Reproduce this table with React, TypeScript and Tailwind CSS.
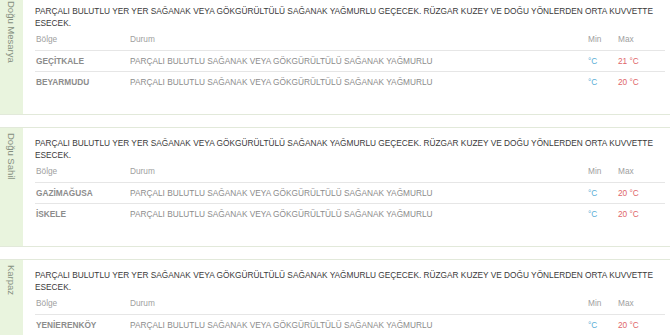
import type { ReactNode } from 'react'

interface Row {
  region: string
  status: string
  min: string
  max: string
}

interface Area {
  name: string
  rows: Row[]
}

const forecast =
  'PARÇALI BULUTLU YER YER SAĞANAK VEYA GÖKGÜRÜLTÜLÜ SAĞANAK YAĞMURLU GEÇECEK. RÜZGAR KUZEY VE DOĞU YÖNLERDEN ORTA KUVVETTE ESECEK.'
const status = 'PARÇALI BULUTLU SAĞANAK VEYA GÖKGÜRÜLTÜLÜ SAĞANAK YAĞMURLU'

const areas: Area[] = [
  {
    name: 'Doğu Mesarya',
    rows: [
      { region: 'GEÇİTKALE', status, min: '°C', max: '21 °C' },
      { region: 'BEYARMUDU', status, min: '°C', max: '20 °C' },
    ],
  },
  {
    name: 'Doğu Sahil',
    rows: [
      { region: 'GAZİMAĞUSA', status, min: '°C', max: '20 °C' },
      { region: 'İSKELE', status, min: '°C', max: '20 °C' },
    ],
  },
  {
    name: 'Karpaz',
    rows: [{ region: 'YENİERENKÖY', status, min: '°C', max: '20 °C' }],
  },
]

function Cells({ children, border }: { children: ReactNode; border?: boolean }) {
  return (
    <div
      className={`grid h-[21px] grid-cols-[95px_458px_30px_47px] items-center ${
        border ? 'border-t border-[#e6e6e6]' : ''
      }`}
    >
      {children}
    </div>
  )
}

function AreaPanel({ area }: { area: Area }) {
  return (
    <section className="flex h-[120px] w-[690px] shrink-0 border-y border-[#e2e9da] bg-white">
      <div className="w-[23px] shrink-0 bg-[#e9f4de] pt-[5px]">
        <span className="block pl-[6px] text-[9.5px] leading-[11px] text-[#858f80] [writing-mode:vertical-rl]">
          {area.name}
        </span>
      </div>
      <div className="w-[630px] pl-[12px] pt-[9px]">
        <p className="w-[630px] text-[8.3px] leading-[12px] text-[#3a3a3a]">{forecast}</p>
        <div className="w-[630px]">
          <Cells>
            <span className="pl-[1px] text-[#a0a0a0]">Bölge</span>
            <span className="text-[#a0a0a0]">Durum</span>
            <span className="text-[#a0a0a0]">Min</span>
            <span className="text-[#a0a0a0]">Max</span>
          </Cells>
          {area.rows.map((row) => (
            <Cells key={row.region} border>
              <span className="pl-[1px] font-bold text-[#8c8c8c]">{row.region}</span>
              <span className="text-[#8c8c8c]">{row.status}</span>
              <span className="text-[#5aaed6]">{row.min}</span>
              <span className="text-[#e0666a]">{row.max}</span>
            </Cells>
          ))}
        </div>
      </div>
    </section>
  )
}

export default function App() {
  return (
    <div className="h-[335px] w-[670px] overflow-hidden bg-white font-['Liberation_Sans',Arial,sans-serif] text-[8.3px]">
      <div className="-mt-[5px] flex flex-col gap-[12px]">
        {areas.map((area) => (
          <AreaPanel key={area.name} area={area} />
        ))}
      </div>
    </div>
  )
}
